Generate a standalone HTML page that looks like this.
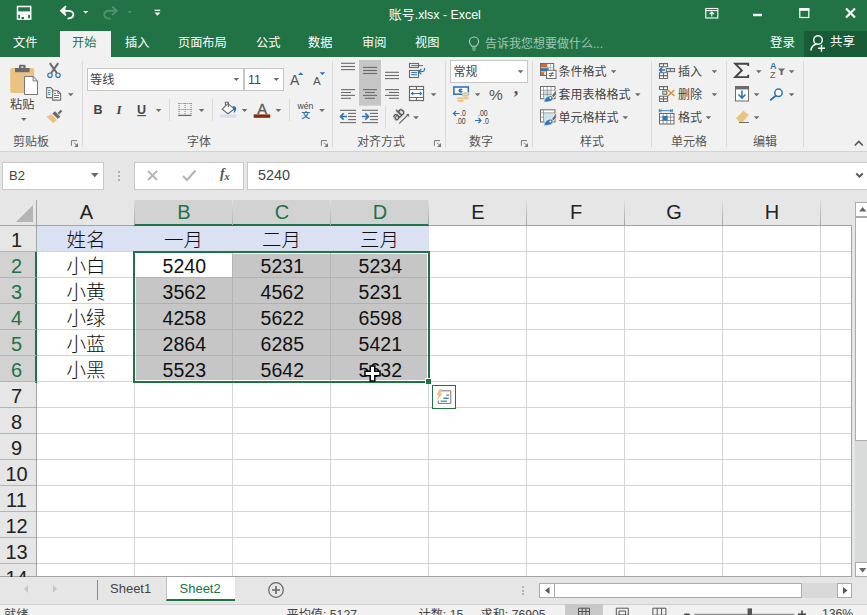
<!DOCTYPE html><html><head><meta charset="utf-8"><title>账号.xlsx - Excel</title><style>
*{box-sizing:border-box;margin:0;padding:0}
html,body{width:867px;height:615px;overflow:hidden;background:#fff}
body{position:relative;font-family:"Liberation Sans","Noto Sans CJK SC",sans-serif;font-size:12px;color:#444}
.a{position:absolute}
.t{position:absolute;white-space:nowrap;line-height:1}
.ui{font-family:"Liberation Sans","Noto Sans CJK SC",sans-serif;font-size:12.5px;color:#444}
.w{color:#fff}
.sep{position:absolute;width:1px;background:#dadada}
.cell{position:absolute;text-align:center;font-size:19.5px;line-height:26px;color:#111;font-weight:300;white-space:nowrap;font-family:"Liberation Sans","Noto Sans CJK SC",sans-serif}
.hd{position:absolute;text-align:center;font-size:20px;line-height:25px;color:#000;white-space:nowrap}
.rh{position:absolute;text-align:center;font-size:20px;line-height:26px;color:#000;white-space:nowrap;left:0;width:36px}
.gl{position:absolute;background:#d4d4d4}
.arr{position:absolute;width:0;height:0;border-left:3px solid transparent;border-right:3px solid transparent;border-top:3px solid #666}
</style></head><body>
<div class="a" style="left:0;top:0;width:867px;height:57px;background:#217346"></div>
<div class="t w" style="left:388.700px;top:8px;font-size:13px">账号<span style="font-size:12.400px">.xlsx - Excel</span></div>
<div class="a" style="left:60px;top:31px;width:51px;height:27px;background:#f1f1f1"></div>
<div class="t" style="left:13px;top:37.400px;font-size:12.200px;color:#fff">文件</div>
<div class="t" style="left:72px;top:37.400px;font-size:12.200px;color:#217346">开始</div>
<div class="t" style="left:125px;top:37.400px;font-size:12.200px;color:#fff">插入</div>
<div class="t" style="left:178px;top:37.400px;font-size:12.200px;color:#fff">页面布局</div>
<div class="t" style="left:256px;top:37.400px;font-size:12.200px;color:#fff">公式</div>
<div class="t" style="left:308px;top:37.400px;font-size:12.200px;color:#fff">数据</div>
<div class="t" style="left:362px;top:37.400px;font-size:12.200px;color:#fff">审阅</div>
<div class="t" style="left:415px;top:37.400px;font-size:12.200px;color:#fff">视图</div>
<div class="t" style="left:485px;top:37.500px;font-size:12px;color:#a2c5b1">告诉我您想要做什么...</div>
<div class="t w" style="left:770px;top:37px;font-size:12.5px">登录</div>
<div class="a" style="left:804px;top:31px;width:63px;height:26px;background:#185c37"></div>
<div class="t w" style="left:830px;top:36px;font-size:12.5px">共享</div>
<svg class="a" style="left:0;top:0" width="867" height="57" viewBox="0 0 867 57" fill="none">
<rect x="17.500" y="6.500" width="13.200" height="12.600" stroke="#fff" stroke-width="1.500"/><rect x="17.500" y="11.400" width="13.200" height="3.400" fill="#fff"/><path d="M20 14.500h8.200v5h-8.200z" fill="#fff"/><rect x="21.500" y="17" width="2.500" height="2.200" fill="#217346"/>
<path d="M62 10.800h6c7 0 7.500 7.500-.5 7.800" stroke="#fff" stroke-width="1.800"/><path d="M66 6.200l-5 4.600 5 4.600" stroke="#fff" stroke-width="1.800"/><path d="M65.500 7.500l-4 3.300 4 3.300z" fill="#fff"/>
<path d="M83.200 11h5l-2.500 2.700z" fill="#fff"/>
<path d="M116.500 10.800h-7.200c-7 0-7 8 1.200 8" stroke="#4f9170" stroke-width="1.900"/><path d="M112.200 6.500l4.600 4.300-4.600 4.300" stroke="#4f9170" stroke-width="1.900"/>
<path d="M127.500 11h4.600l-2.300 2.600z" fill="#4f9170"/>
<path d="M154.600 10.300h5.600" stroke="#fff" stroke-width="1.200"/><path d="M154.400 12.500h6l-3 3.200z" fill="#fff"/>
<rect x="705.800" y="8.500" width="12" height="9.500" stroke="#fff" stroke-width="1.100"/><path d="M705.800 10.600h12" stroke="#fff" stroke-width="1.100"/><path d="M711.800 16.500v-4M709.600 14.200l2.200-2.200 2.200 2.200" stroke="#fff" stroke-width="1.100"/>
<rect x="753" y="13.800" width="9" height="2.400" fill="#fff"/>
<rect x="799.800" y="9" width="9" height="8.500" stroke="#fff" stroke-width="1.200"/><rect x="799.200" y="8" width="10.200" height="2.800" fill="#fff"/>
<path d="M846 8.500l9 9M855 8.500l-9 9" stroke="#fff" stroke-width="2.200"/>
<path d="M471.800 46.200c-1.600-1.600-2.400-2.800-2.400-4.600a4.600 4.600 0 0 1 9.200 0c0 1.800-.8 3-2.400 4.600z" stroke="#b5d1c0" stroke-width="1.100"/><path d="M472 48h4M472.500 50h3" stroke="#b5d1c0" stroke-width="1.100"/>
<circle cx="818" cy="40" r="4.300" stroke="#fff" stroke-width="1.400"/><path d="M810.800 50.500c.8-4 3.200-6 5.800-6.500" stroke="#fff" stroke-width="1.400"/><path d="M818 48.200h7M821.500 44.700v7" stroke="#fff" stroke-width="1.400"/>
</svg>
<div class="a" style="left:0;top:57px;width:867px;height:95px;background:#f1f1f1"></div>
<div class="a" style="left:0;top:151px;width:867px;height:1px;background:#d2d2d2"></div>
<div class="a" style="left:0;top:152px;width:867px;height:48px;background:#e6e6e6"></div>
<div class="sep" style="left:82px;top:61px;height:86px"></div>
<div class="sep" style="left:332px;top:61px;height:86px"></div>
<div class="sep" style="left:445px;top:61px;height:86px"></div>
<div class="sep" style="left:532px;top:61px;height:86px"></div>
<div class="sep" style="left:651px;top:61px;height:86px"></div>
<div class="sep" style="left:726px;top:61px;height:86px"></div>
<div class="sep" style="left:803px;top:61px;height:86px"></div>
<div class="sep" style="left:169px;top:99px;height:22px"></div>
<div class="sep" style="left:212px;top:99px;height:22px"></div>
<div class="sep" style="left:289px;top:99px;height:22px"></div>
<div class="sep" style="left:385px;top:106px;height:22px"></div>
<div class="t ui" style="left:13px;top:135.500px;font-size:12px;color:#555">剪贴板</div>
<div class="t ui" style="left:187px;top:135.500px;font-size:12px;color:#555">字体</div>
<div class="t ui" style="left:357px;top:135.500px;font-size:12px;color:#555">对齐方式</div>
<div class="t ui" style="left:469px;top:135.500px;font-size:12px;color:#555">数字</div>
<div class="t ui" style="left:580px;top:135.500px;font-size:12px;color:#555">样式</div>
<div class="t ui" style="left:671px;top:135.500px;font-size:12px;color:#555">单元格</div>
<div class="t ui" style="left:753px;top:135.500px;font-size:12px;color:#555">编辑</div>
<svg class="a" style="left:0;top:57px" width="867" height="94" viewBox="0 57 867 94" fill="none">
<rect x="10.2" y="68" width="24" height="25" rx="2" fill="#eac282"/>
<rect x="15" y="68" width="14.6" height="4.2" fill="#6b6b6b"/><rect x="19" y="64.8" width="6.6" height="5" rx="1.2" fill="#6b6b6b"/><rect x="21.3" y="66.3" width="2" height="1.7" fill="#ddd"/>
<path d="M24.5 76.5h8.6l4.4 4.4v13.6h-13z" fill="#fff" stroke="#777" stroke-width="1"/><path d="M33.1 76.5v4.4h4.4" stroke="#777" stroke-width="1"/>
<path d="M21 118h5.6l-2.8 3z" fill="#6b6b6b"/>
<path d="M49.800 63.200l7 9.800M58.200 63.200l-7 9.800" stroke="#6b6b6b" stroke-width="2.100"/>
<circle cx="50" cy="75.2" r="2.2" stroke="#2e75b6" stroke-width="1.2"/><circle cx="58" cy="75.2" r="2.2" stroke="#2e75b6" stroke-width="1.2"/>
<path d="M46.700 87.600h4l2 2v8h-6z" fill="#fff" stroke="#6b6b6b" stroke-width="1.100"/>
<path d="M52.700 90.700h5l2.900 2.900v6.500h-7.900z" fill="#fff" stroke="#6b6b6b" stroke-width="1.100"/><path d="M57.700 90.700v2.900h2.900" stroke="#6b6b6b" stroke-width=".8"/>
<path d="M48 90.400h2.500M48 92.500h2.500M48 94.400h2.500M54 93.400h2M54 95.500h5M54 97.500h5" stroke="#2e75b6" stroke-width=".9"/>
<path d="M68 93.2h5.6l-2.8 3z" fill="#6b6b6b"/>
<path d="M46.600 116.600l4.800-2.300 5.600 5.700-4 3.200z" fill="#eac282"/>
<path d="M52.300 113.600l2.700-2.300 5.300 5.500-2.600 2z" fill="#6b6b6b"/><path d="M57.600 113l3.200-3.200 1.500 1.500-3.100 3.200z" fill="#6b6b6b"/>
<rect x="87.5" y="68.5" width="156" height="22" fill="#fff" stroke="#c6c6c6"/>
<rect x="244.5" y="68.5" width="39" height="22" fill="#fff" stroke="#c6c6c6"/>
<path d="M233.6 78h5.6l-2.8 3z" fill="#6b6b6b"/>
<path d="M273.6 78h5.6l-2.8 3z" fill="#6b6b6b"/>
<path d="M298 75l2.7-2.8 2.7 2.8z" fill="#2e75b6"/><path d="M319.6 72.2h5.6l-2.8 2.8z" fill="#2e75b6"/>
<path d="M137.2 115.6H146" stroke="#555" stroke-width="1.2"/>
<path d="M155.8 109h5.6l-2.8 3z" fill="#6b6b6b"/>
<rect x="178.6" y="103" width="1" height="1" fill="#7d7d7d"/>
<rect x="178.6" y="109" width="1" height="1" fill="#7d7d7d"/>
<rect x="180.6" y="103" width="1" height="1" fill="#7d7d7d"/>
<rect x="180.6" y="109" width="1" height="1" fill="#7d7d7d"/>
<rect x="182.6" y="103" width="1" height="1" fill="#7d7d7d"/>
<rect x="182.6" y="109" width="1" height="1" fill="#7d7d7d"/>
<rect x="184.6" y="103" width="1" height="1" fill="#7d7d7d"/>
<rect x="184.6" y="109" width="1" height="1" fill="#7d7d7d"/>
<rect x="186.6" y="103" width="1" height="1" fill="#7d7d7d"/>
<rect x="186.6" y="109" width="1" height="1" fill="#7d7d7d"/>
<rect x="188.6" y="103" width="1" height="1" fill="#7d7d7d"/>
<rect x="188.6" y="109" width="1" height="1" fill="#7d7d7d"/>
<rect x="190.6" y="103" width="1" height="1" fill="#7d7d7d"/>
<rect x="190.6" y="109" width="1" height="1" fill="#7d7d7d"/>
<rect x="178.6" y="103" width="1" height="1" fill="#7d7d7d"/>
<rect x="184.6" y="103" width="1" height="1" fill="#7d7d7d"/>
<rect x="190.6" y="103" width="1" height="1" fill="#7d7d7d"/>
<rect x="178.6" y="105" width="1" height="1" fill="#7d7d7d"/>
<rect x="184.6" y="105" width="1" height="1" fill="#7d7d7d"/>
<rect x="190.6" y="105" width="1" height="1" fill="#7d7d7d"/>
<rect x="178.6" y="107" width="1" height="1" fill="#7d7d7d"/>
<rect x="184.6" y="107" width="1" height="1" fill="#7d7d7d"/>
<rect x="190.6" y="107" width="1" height="1" fill="#7d7d7d"/>
<rect x="178.6" y="109" width="1" height="1" fill="#7d7d7d"/>
<rect x="184.6" y="109" width="1" height="1" fill="#7d7d7d"/>
<rect x="190.6" y="109" width="1" height="1" fill="#7d7d7d"/>
<rect x="178.6" y="111" width="1" height="1" fill="#7d7d7d"/>
<rect x="184.6" y="111" width="1" height="1" fill="#7d7d7d"/>
<rect x="190.6" y="111" width="1" height="1" fill="#7d7d7d"/>
<rect x="178.6" y="113" width="1" height="1" fill="#7d7d7d"/>
<rect x="184.6" y="113" width="1" height="1" fill="#7d7d7d"/>
<rect x="190.6" y="113" width="1" height="1" fill="#7d7d7d"/>
<path d="M178.2 115.4H191.6" stroke="#6b6b6b" stroke-width="1.3"/>
<path d="M198.8 109h5.6l-2.8 3z" fill="#6b6b6b"/>
<path d="M222.200 109.200l5.800-5.500 6.200 5.200-6.200 4.800z" fill="#fff" stroke="#6b6b6b" stroke-width="1.100"/><path d="M225.400 105.600v-3.300h3v5" stroke="#6b6b6b" stroke-width="1.100"/>
<path d="M232.800 106c2.600.2 3.800 1.400 3.400 3.200-.3 1.400-1.200 2.600-2.400 4 .3-2.200.2-3.800-1-5z" fill="#2e75b6"/>
<rect x="220" y="114.400" width="16.200" height="3.400" fill="#d5dff0"/>
<path d="M241.8 109h5.6l-2.8 3z" fill="#6b6b6b"/>
<rect x="253.700" y="114.400" width="16.500" height="3.400" fill="#8e2a0b"/>
<path d="M275.6 109h5.6l-2.8 3z" fill="#6b6b6b"/>
<path d="M319.2 109h5.6l-2.8 3z" fill="#6b6b6b"/>
<rect x="359" y="60" width="22" height="45.700" fill="#c6c6c6"/>
<path d="M341 63.3H355" stroke="#6b6b6b" stroke-width="1.1"/>
<path d="M341 66.5H355" stroke="#6b6b6b" stroke-width="1.1"/>
<path d="M341 69.6H355" stroke="#6b6b6b" stroke-width="1.1"/>
<path d="M363 67.4H377" stroke="#6b6b6b" stroke-width="1.1"/>
<path d="M363 70.5H377" stroke="#6b6b6b" stroke-width="1.1"/>
<path d="M363 73.5H377" stroke="#6b6b6b" stroke-width="1.1"/>
<path d="M385 72.3H399" stroke="#6b6b6b" stroke-width="1.1"/>
<path d="M385 75.5H399" stroke="#6b6b6b" stroke-width="1.1"/>
<path d="M385 78.6H399" stroke="#6b6b6b" stroke-width="1.1"/>
<path d="M341 89.6H355" stroke="#6b6b6b" stroke-width="1.1"/>
<path d="M363 89.6H377" stroke="#6b6b6b" stroke-width="1.1"/>
<path d="M385 89.6H399" stroke="#6b6b6b" stroke-width="1.1"/>
<path d="M341 92.5H351" stroke="#6b6b6b" stroke-width="1.1"/>
<path d="M365 92.5H375" stroke="#6b6b6b" stroke-width="1.1"/>
<path d="M389 92.5H399" stroke="#6b6b6b" stroke-width="1.1"/>
<path d="M341 95.4H355" stroke="#6b6b6b" stroke-width="1.1"/>
<path d="M363 95.4H377" stroke="#6b6b6b" stroke-width="1.1"/>
<path d="M385 95.4H399" stroke="#6b6b6b" stroke-width="1.1"/>
<path d="M341 98.3H351" stroke="#6b6b6b" stroke-width="1.1"/>
<path d="M365 98.3H375" stroke="#6b6b6b" stroke-width="1.1"/>
<path d="M389 98.3H399" stroke="#6b6b6b" stroke-width="1.1"/>
<rect x="409.500" y="63.500" width="9" height="4" stroke="#6b6b6b" stroke-width="1.100" fill="#f1f1f1"/><rect x="409.500" y="70.500" width="9" height="7" stroke="#6b6b6b" stroke-width="1.100" fill="#f1f1f1"/>
<path d="M411.200 65.600H423M411.200 72.600h6M411.200 74.700h6" stroke="#2e75b6" stroke-width="1"/><path d="M424.600 68c.2 2.500-1 3.700-3 3.700h-2.500M421.400 69l-2.800 2.700 2.800 2.700" stroke="#2e75b6" stroke-width="1.200"/>
<rect x="409.500" y="86.500" width="14" height="14" stroke="#6b6b6b" stroke-width="1.200" fill="#fff"/><path d="M409.500 89.500h14M409.500 97.500h14M416.500 86.500v3M416.500 97.500v3" stroke="#6b6b6b" stroke-width="1.100"/>
<path d="M411.500 93.500h10M413.200 91.800l-1.700 1.700 1.700 1.700M419.800 91.800l1.700 1.700-1.700 1.700" stroke="#2e75b6" stroke-width="1.100"/>
<path d="M430.8 93.3h5.6l-2.8 3z" fill="#6b6b6b"/>
<path d="M340 110.3H356" stroke="#6b6b6b" stroke-width="1.1"/>
<path d="M340 122.6H356" stroke="#6b6b6b" stroke-width="1.1"/>
<path d="M348 113.4H356" stroke="#6b6b6b" stroke-width="1.1"/>
<path d="M348 116.5H356" stroke="#6b6b6b" stroke-width="1.1"/>
<path d="M348 119.6H356" stroke="#6b6b6b" stroke-width="1.1"/>
<path d="M362 110.3H378" stroke="#6b6b6b" stroke-width="1.1"/>
<path d="M362 122.6H378" stroke="#6b6b6b" stroke-width="1.1"/>
<path d="M370 113.4H378" stroke="#6b6b6b" stroke-width="1.1"/>
<path d="M370 116.5H378" stroke="#6b6b6b" stroke-width="1.1"/>
<path d="M370 119.6H378" stroke="#6b6b6b" stroke-width="1.1"/>
<path d="M340.500 116.500h6.500M343.700 113.300l-3.200 3.200 3.200 3.200" stroke="#2e75b6" stroke-width="1.700"/>
<path d="M362 116.500h6.500M365.300 113.300l3.200 3.200-3.200 3.200" stroke="#2e75b6" stroke-width="1.700"/>
<path d="M399.200 123.600l8.600-8.600" stroke="#6b6b6b" stroke-width="1.200"/><path d="M406 114h3.100v3.100z" fill="#6b6b6b"/>
<path d="M413.2 116.3h5.6l-2.8 3z" fill="#6b6b6b"/>
<rect x="450.500" y="60.500" width="77" height="22" fill="#fff" stroke="#c6c6c6"/>
<path d="M517.7 70.2h5.6l-2.8 3z" fill="#6b6b6b"/>
<rect x="453.900" y="87" width="14.400" height="7.200" fill="#fff" stroke="#2e75b6" stroke-width="1.600"/><circle cx="460.800" cy="90.600" r="2.200" fill="#2e75b6"/><path d="M460.800 90.600l2.600-1.600v2.600z" fill="#fff"/>
<ellipse cx="465.400" cy="93.4" rx="3.700" ry="1.400" fill="#eac282" stroke="#f1f1f1" stroke-width=".5"/>
<ellipse cx="465.400" cy="95.8" rx="3.700" ry="1.400" fill="#eac282" stroke="#f1f1f1" stroke-width=".5"/>
<ellipse cx="465.400" cy="98.2" rx="3.700" ry="1.400" fill="#eac282" stroke="#f1f1f1" stroke-width=".5"/>
<ellipse cx="460.400" cy="98.3" rx="3.700" ry="1.400" fill="#eac282" stroke="#f1f1f1" stroke-width=".5"/>
<ellipse cx="460.400" cy="100.8" rx="3.700" ry="1.400" fill="#eac282" stroke="#f1f1f1" stroke-width=".5"/>
<path d="M474.8 93.3h5.6l-2.8 3z" fill="#6b6b6b"/>
<path d="M453.500 113.500h6M456 111l-2.500 2.500 2.500 2.500" stroke="#2e75b6" stroke-width="1.200"/>
<path d="M475 120.500h6M478.500 118l2.500 2.500-2.500 2.500" stroke="#2e75b6" stroke-width="1.200"/>
<rect x="540.500" y="63.500" width="13.200" height="12" fill="#fff" stroke="#6b6b6b"/><path d="M547.200 63.500v12M550.500 63.500v6M540.500 67.600h13M540.500 71.600h7" stroke="#9a9a9a" stroke-width=".6"/><rect x="541" y="64" width="6" height="3.300" fill="#d06f2c"/><rect x="541" y="68.200" width="7.700" height="3" fill="#2e75b6"/><rect x="541" y="72.100" width="3.300" height="3" fill="#d06f2c"/>
<rect x="546.500" y="70.300" width="9.500" height="8.200" fill="#fff" stroke="#6b6b6b"/><path d="M548.800 73.400h5M548.800 75.600h5M552.600 72l-2.600 5" stroke="#444" stroke-width=".8"/>
<rect x="540.500" y="86.5" width="14.500" height="12.200" fill="#fff" stroke="#6b6b6b"/>
<rect x="543.500" y="90.2" width="7.500" height="8.200" fill="#cfe3ea"/>
<path d="M540.500 90.2h14.500M540.500 94.4h14.500M543.500 86.5v12.200M547.300 86.5v12.200M551 86.5v12.200" stroke="#8a8a8a" stroke-width=".7"/>
<path d="M551.600 95.8l4.700-6.800v5.600l-2.900 3z" fill="#6b6b6b" stroke="#f1f1f1" stroke-width=".8"/>
<path d="M543.800 102.1c1-3.800 3.800-6.200 6.700-6.200 2.400 0 3.200 2.400 1.700 4.200-1.300 1.600-4.200 2-8.400 2z" fill="#2e75b6" stroke="#f1f1f1" stroke-width=".6"/><circle cx="550.400" cy="98.1" r="1" fill="#fff"/>
<rect x="540.500" y="109.8" width="14.500" height="12.200" fill="#fff" stroke="#6b6b6b"/>
<rect x="543.500" y="112.8" width="10" height="8.700" fill="#cfe3ea"/>
<path d="M540.500 112.8h14.500M543.500 109.8v12.200M540.500 117.2h3" stroke="#8a8a8a" stroke-width=".7"/>
<path d="M551.600 119.1l4.700-6.800v5.600l-2.900 3z" fill="#6b6b6b" stroke="#f1f1f1" stroke-width=".8"/>
<path d="M543.800 125.39999999999999c1-3.800 3.800-6.200 6.700-6.200 2.400 0 3.200 2.400 1.700 4.200-1.300 1.600-4.200 2-8.400 2z" fill="#2e75b6" stroke="#f1f1f1" stroke-width=".6"/><circle cx="550.400" cy="121.39999999999999" r="1" fill="#fff"/>
<path d="M610.8 70.2h5.6l-2.8 3z" fill="#6b6b6b"/>
<path d="M635 93.3h5.6l-2.8 3z" fill="#6b6b6b"/>
<path d="M622.5 116.3h5.6l-2.8 3z" fill="#6b6b6b"/>
<path d="M659.500 63.600h8v3.100h-8zM663.500 63.600v3.100M659.500 72.800h8v5.700h-8zM659.500 75.600h8M663.500 72.800v5.700" stroke="#6b6b6b" stroke-width="1.100" fill="#fff"/>
<rect x="666.300" y="68.500" width="8.300" height="3.100" fill="#cfe3ea" stroke="#6b6b6b"/><path d="M670.400 68.500v3.100" stroke="#6b6b6b"/>
<path d="M659.600 70h5.400M662.400 67.300l-2.800 2.700 2.800 2.700" stroke="#2e75b6" stroke-width="1.500"/>
<path d="M711.6 70.2h5.6l-2.8 3z" fill="#6b6b6b"/>
<path d="M659.500 86.600h8v2.900h-8zM663.500 86.600v2.900M659.500 96.300h8v5.200h-8zM659.500 98.900h8M663.500 96.300v5.200" stroke="#6b6b6b" stroke-width="1.100" fill="#fff"/>
<rect x="662.800" y="91.100" width="4" height="3.200" fill="#cfe3ea" stroke="#6b6b6b"/>
<path d="M667.800 90l6.600 6M674.400 90l-6.600 6" stroke="#e08a2e" stroke-width="1.400"/>
<path d="M711.6 93.3h5.6l-2.8 3z" fill="#6b6b6b"/>
<rect x="659.500" y="113.500" width="14.500" height="10.500" fill="#fff" stroke="#6b6b6b"/><path d="M659.500 117h14.500M659.500 120.500h14.500M663.200 113.500v10.500M666.900 113.500v10.500M670.600 113.500v10.500" stroke="#6b6b6b" stroke-width=".7"/>
<rect x="662.500" y="116" width="5" height="4.500" fill="#2e75b6"/>
<path d="M659.500 110.700h12.500M659.300 109v3.400M672.300 109v3.400M661.500 109.300l-1.500 1.400 1.500 1.400M670 109.300l1.500 1.400-1.500 1.400" stroke="#2e75b6" stroke-width=".9"/>
<path d="M705.6 116.3h5.6l-2.8 3z" fill="#6b6b6b"/>
<path d="M748.200 66v-2.300h-13l6.600 6.700-6.600 6.700h13v-2.300" stroke="#444" stroke-width="1.900" stroke-linejoin="miter"/>
<path d="M756 70.2h5.6l-2.8 3z" fill="#6b6b6b"/>
<rect x="735.500" y="86.500" width="13" height="14.500" fill="#fff" stroke="#6b6b6b"/><rect x="735" y="86.200" width="14" height="3.200" fill="#6b6b6b"/>
<path d="M742 90.500v7.500M738.500 94.500l3.500 3.500 3.500-3.500" stroke="#2e75b6" stroke-width="1.600"/>
<path d="M753.8 93.3h5.6l-2.8 3z" fill="#6b6b6b"/>
<path d="M735.800 118.500l7.700-7.700 5.300 4.200-6.300 7.300h-3z" fill="#eac282"/><path d="M735.800 118.500l3.700 3.800" stroke="#f1f1f1" stroke-width=".8"/><path d="M739 122.500h10" stroke="#6b6b6b" stroke-width="1"/>
<path d="M753.8 116.3h5.6l-2.8 3z" fill="#6b6b6b"/>
<path d="M778 68.500h7.200l-2.600 2.800v3.700h-2v-3.700z" fill="#6b6b6b"/>
<path d="M788.8 70.2h5.6l-2.8 3z" fill="#6b6b6b"/>
<circle cx="778.500" cy="92.800" r="3.700" stroke="#2e75b6" stroke-width="1.500" fill="#fff"/><path d="M775.800 95.800l-5 4" stroke="#2e75b6" stroke-width="2" stroke-linecap="round"/>
<path d="M788.8 93.3h5.6l-2.8 3z" fill="#6b6b6b"/>
<path d="M71.4 145.800v-5.200h5.600" stroke="#777" stroke-width="1"/><path d="M78 143v3.900h-3.900z" fill="#777"/><path d="M74.2 142.800l3 3" stroke="#777" stroke-width="1"/>
<path d="M321.4 145.800v-5.200h5.600" stroke="#777" stroke-width="1"/><path d="M328 143v3.900h-3.900z" fill="#777"/><path d="M324.2 142.800l3 3" stroke="#777" stroke-width="1"/>
<path d="M434.4 145.800v-5.200h5.600" stroke="#777" stroke-width="1"/><path d="M441 143v3.900h-3.900z" fill="#777"/><path d="M437.2 142.800l3 3" stroke="#777" stroke-width="1"/>
<path d="M521.4 145.800v-5.200h5.600" stroke="#777" stroke-width="1"/><path d="M528 143v3.900h-3.900z" fill="#777"/><path d="M524.2 142.800l3 3" stroke="#777" stroke-width="1"/>
<path d="M854.800 145.500l4-4 4 4" stroke="#555" stroke-width="1.600"/>
</svg>
<div class="t" style="left:10px;top:98.5px;font-size:12.2px;color:#444;">粘贴</div>
<div class="t" style="left:90px;top:74px;font-size:12.2px;color:#444;">等线</div>
<div class="t" style="left:248px;top:74px;font-size:12.5px;color:#444;">11</div>
<div class="t" style="left:93.5px;top:104.3px;font-size:12.5px;color:#444;font-weight:bold">B</div>
<div class="t" style="left:116.5px;top:103px;font-size:12.5px;color:#444;font-style:italic;font-weight:bold;font-family:'Liberation Serif',serif;font-size:13px">I</div>
<div class="t" style="left:137px;top:104.3px;font-size:12.5px;color:#444;font-weight:bold">U</div>
<div class="t" style="left:290px;top:72.6px;font-size:14px;color:#555;">A</div>
<div class="t" style="left:313px;top:75.5px;font-size:11.5px;color:#555;">A</div>
<div class="t" style="left:257.2px;top:101.6px;font-size:14.8px;color:#5a5a5a;-webkit-text-stroke:.35px #5a5a5a">A</div>
<div class="t" style="left:297.5px;top:101.5px;font-size:8.6px;color:#444;">wén</div>
<div class="t" style="left:301.5px;top:110.5px;font-size:8.5px;color:#2e75b6;font-weight:bold">文</div>
<div class="t" style="left:0px;top:0px;font-size:11.8px;color:#333;-webkit-text-stroke:.3px #333;transform:rotate(-45deg);transform-origin:left top;left:390px;top:114.600px;will-change:transform">ab</div>
<div class="t" style="left:453.5px;top:65.5px;font-size:12px;color:#444;">常规</div>
<div class="t" style="left:489px;top:87px;font-size:15.5px;color:#555;">%</div>
<div class="t" style="left:513.8px;top:79px;font-size:18px;color:#555;font-weight:bold;font-family:'Liberation Serif',serif">,</div>
<div class="t" style="left:460.3px;top:109.2px;font-size:8.6px;color:#3a3a3a;transform:scaleX(.8);transform-origin:left top">.0</div>
<div class="t" style="left:455.8px;top:116.9px;font-size:8.6px;color:#3a3a3a;transform:scaleX(.8);transform-origin:left top">.00</div>
<div class="t" style="left:477.5px;top:109.2px;font-size:8.6px;color:#3a3a3a;transform:scaleX(.8);transform-origin:left top">.00</div>
<div class="t" style="left:482.5px;top:116.9px;font-size:8.6px;color:#3a3a3a;transform:scaleX(.8);transform-origin:left top">.0</div>
<div class="t" style="left:558.4px;top:66px;font-size:12px;color:#444;">条件格式</div>
<div class="t" style="left:558.4px;top:89px;font-size:12px;color:#444;">套用表格格式</div>
<div class="t" style="left:558.4px;top:112px;font-size:12px;color:#444;">单元格样式</div>
<div class="t" style="left:678px;top:66px;font-size:12px;color:#444;">插入</div>
<div class="t" style="left:678px;top:89px;font-size:12px;color:#444;">删除</div>
<div class="t" style="left:678px;top:112px;font-size:12px;color:#444;">格式</div>
<div class="t" style="left:770px;top:62px;font-size:9px;color:#2e75b6;font-weight:bold">A</div>
<div class="t" style="left:770px;top:71px;font-size:9px;color:#6b5560;">Z</div>
<div class="a" style="left:2px;top:162px;width:102px;height:28px;background:#fff;border:1px solid #c8c8c8"></div>
<div class="t" style="left:9px;top:169px;font-size:13px;color:#444">B2</div>
<svg class="a" style="left:90.800px;top:173.300px" width="8" height="5" viewBox="0 0 8 5"><path d="M0 0h7.600l-3.800 4.200z" fill="#666"/></svg>
<div class="a" style="left:118px;top:171px;width:2px;height:2px;background:#b0b0b0"></div>
<div class="a" style="left:118px;top:175px;width:2px;height:2px;background:#b0b0b0"></div>
<div class="a" style="left:118px;top:179px;width:2px;height:2px;background:#b0b0b0"></div>
<div class="a" style="left:134px;top:162px;width:110px;height:28px;background:#fff;border:1px solid #c8c8c8"></div>
<div class="a" style="left:247px;top:162px;width:620px;height:28px;background:#fff;border:1px solid #c8c8c8;border-right:none"></div>
<div class="t" style="left:258px;top:167.500px;font-size:14.400px;color:#444">5240</div>
<svg class="a" style="left:144px;top:168px" width="100" height="16" viewBox="0 0 100 16"><path d="M4 3l9 9M13 3l-9 9" stroke="#b4b4b4" stroke-width="1.800" fill="none"/><path d="M39 8l4 4 8.500-9.500" stroke="#b4b4b4" stroke-width="2" fill="none"/></svg>
<div class="t" style="left:220px;top:167px;font-size:14px;color:#555;font-family:'Liberation Serif',serif;font-style:italic;font-weight:bold">f<span style="font-size:11px;position:relative;top:2px;left:-.5px">x</span></div>
<svg class="a" style="left:855px;top:172px" width="10" height="8" viewBox="0 0 10 8"><path d="M1.300 1.500l3.200 3.200 3.200-3.200" stroke="#555" stroke-width="1.800" fill="none"/></svg>
<div class="a" style="left:0;top:200px;width:867px;height:404px;background:#e6e6e6"></div>
<div class="a" style="left:37px;top:226px;width:814px;height:350px;background:#fff"></div>
<div class="a" style="left:135px;top:200px;width:293px;height:24px;background:#d2d2d2"></div>
<div class="a" style="left:134px;top:224px;width:295px;height:2px;background:#217346"></div>
<div class="a" style="left:0;top:252px;width:35px;height:130px;background:#d2d2d2"></div>
<div class="a" style="left:35px;top:252px;width:2px;height:131px;background:#217346"></div>
<div class="a" style="left:0;top:225px;width:134px;height:1px;background:#a3a3a3"></div>
<div class="a" style="left:429px;top:225px;width:423px;height:1px;background:#a3a3a3"></div>
<div class="a" style="left:36px;top:200px;width:1px;height:52px;background:#a3a3a3"></div>
<div class="a" style="left:36px;top:383px;width:1px;height:194px;background:#a3a3a3"></div>
<div class="a" style="left:851px;top:225px;width:1px;height:352px;background:#a3a3a3"></div>
<div class="a" style="left:0;top:576px;width:852px;height:1px;background:#a3a3a3"></div>
<div class="a" style="left:134px;top:200px;width:1px;height:25px;background:linear-gradient(#e0e0e0,#a3a3a3)"></div>
<div class="a" style="left:232px;top:200px;width:1px;height:25px;background:linear-gradient(#e0e0e0,#b0b0b0)"></div>
<div class="a" style="left:330px;top:200px;width:1px;height:25px;background:linear-gradient(#e0e0e0,#b0b0b0)"></div>
<div class="a" style="left:428px;top:200px;width:1px;height:25px;background:linear-gradient(#e0e0e0,#a3a3a3)"></div>
<div class="a" style="left:526px;top:200px;width:1px;height:25px;background:linear-gradient(#e0e0e0,#a3a3a3)"></div>
<div class="a" style="left:624px;top:200px;width:1px;height:25px;background:linear-gradient(#e0e0e0,#a3a3a3)"></div>
<div class="a" style="left:722px;top:200px;width:1px;height:25px;background:linear-gradient(#e0e0e0,#a3a3a3)"></div>
<div class="a" style="left:820px;top:200px;width:1px;height:25px;background:linear-gradient(#e0e0e0,#a3a3a3)"></div>
<div class="a" style="left:0;top:251px;width:36px;height:1px;background:#b4b4b4"></div>
<div class="a" style="left:0;top:277px;width:36px;height:1px;background:#b4b4b4"></div>
<div class="a" style="left:0;top:303px;width:36px;height:1px;background:#b4b4b4"></div>
<div class="a" style="left:0;top:329px;width:36px;height:1px;background:#b4b4b4"></div>
<div class="a" style="left:0;top:355px;width:36px;height:1px;background:#b4b4b4"></div>
<div class="a" style="left:0;top:381px;width:36px;height:1px;background:#b4b4b4"></div>
<div class="a" style="left:0;top:407px;width:36px;height:1px;background:#b4b4b4"></div>
<div class="a" style="left:0;top:433px;width:36px;height:1px;background:#b4b4b4"></div>
<div class="a" style="left:0;top:459px;width:36px;height:1px;background:#b4b4b4"></div>
<div class="a" style="left:0;top:485px;width:36px;height:1px;background:#b4b4b4"></div>
<div class="a" style="left:0;top:511px;width:36px;height:1px;background:#b4b4b4"></div>
<div class="a" style="left:0;top:537px;width:36px;height:1px;background:#b4b4b4"></div>
<div class="a" style="left:0;top:563px;width:36px;height:1px;background:#b4b4b4"></div>
<div class="a" style="left:0;top:589px;width:36px;height:1px;background:#b4b4b4"></div>
<svg class="a" style="left:15px;top:204px" width="19" height="19" viewBox="0 0 19 19"><path d="M18 1v17H1z" fill="#b5b5b5"/></svg>
<div class="gl" style="left:134px;top:226px;width:1px;height:350px"></div>
<div class="gl" style="left:232px;top:226px;width:1px;height:350px"></div>
<div class="gl" style="left:330px;top:226px;width:1px;height:350px"></div>
<div class="gl" style="left:428px;top:226px;width:1px;height:350px"></div>
<div class="gl" style="left:526px;top:226px;width:1px;height:350px"></div>
<div class="gl" style="left:624px;top:226px;width:1px;height:350px"></div>
<div class="gl" style="left:722px;top:226px;width:1px;height:350px"></div>
<div class="gl" style="left:820px;top:226px;width:1px;height:350px"></div>
<div class="gl" style="left:37px;top:251px;width:814px;height:1px"></div>
<div class="gl" style="left:37px;top:277px;width:814px;height:1px"></div>
<div class="gl" style="left:37px;top:303px;width:814px;height:1px"></div>
<div class="gl" style="left:37px;top:329px;width:814px;height:1px"></div>
<div class="gl" style="left:37px;top:355px;width:814px;height:1px"></div>
<div class="gl" style="left:37px;top:381px;width:814px;height:1px"></div>
<div class="gl" style="left:37px;top:407px;width:814px;height:1px"></div>
<div class="gl" style="left:37px;top:433px;width:814px;height:1px"></div>
<div class="gl" style="left:37px;top:459px;width:814px;height:1px"></div>
<div class="gl" style="left:37px;top:485px;width:814px;height:1px"></div>
<div class="gl" style="left:37px;top:511px;width:814px;height:1px"></div>
<div class="gl" style="left:37px;top:537px;width:814px;height:1px"></div>
<div class="gl" style="left:37px;top:563px;width:814px;height:1px"></div>
<div class="a" style="left:37px;top:226px;width:392px;height:25px;background:#d9e1f2"></div>
<div class="a" style="left:136px;top:254px;width:291px;height:126px;background:#c6c6c6"></div>
<div class="a" style="left:232px;top:254px;width:1px;height:126px;background:#b2b2b2"></div>
<div class="a" style="left:330px;top:254px;width:1px;height:126px;background:#b2b2b2"></div>
<div class="a" style="left:136px;top:277px;width:291px;height:1px;background:#b2b2b2"></div>
<div class="a" style="left:136px;top:303px;width:291px;height:1px;background:#b2b2b2"></div>
<div class="a" style="left:136px;top:329px;width:291px;height:1px;background:#b2b2b2"></div>
<div class="a" style="left:136px;top:355px;width:291px;height:1px;background:#b2b2b2"></div>
<div class="a" style="left:135px;top:253px;width:97px;height:24px;background:#fff"></div>
<div class="a" style="left:133px;top:251px;width:297px;height:132px;border:2px solid #217346"></div>
<div class="a" style="left:425px;top:378px;width:6px;height:6px;background:#217346;border:1px solid #fff;border-right:none;border-bottom:none"></div>
<div class="hd" style="left:38px;top:200px;width:97px;color:#222">A</div>
<div class="hd" style="left:135px;top:200px;width:98px;color:#217346">B</div>
<div class="hd" style="left:233px;top:200px;width:98px;color:#217346">C</div>
<div class="hd" style="left:331px;top:200px;width:98px;color:#217346">D</div>
<div class="hd" style="left:429px;top:200px;width:98px;color:#222">E</div>
<div class="hd" style="left:527px;top:200px;width:98px;color:#222">F</div>
<div class="hd" style="left:625px;top:200px;width:98px;color:#222">G</div>
<div class="hd" style="left:723px;top:200px;width:98px;color:#222">H</div>
<div class="rh" style="top:227px;color:#222;left:-1.500px">1</div>
<div class="rh" style="top:253px;color:#217346;left:-1.500px">2</div>
<div class="rh" style="top:279px;color:#217346;left:-1.500px">3</div>
<div class="rh" style="top:305px;color:#217346;left:-1.500px">4</div>
<div class="rh" style="top:331px;color:#217346;left:-1.500px">5</div>
<div class="rh" style="top:357px;color:#217346;left:-1.500px">6</div>
<div class="rh" style="top:383px;color:#222;left:-1.500px">7</div>
<div class="rh" style="top:409px;color:#222;left:-1.500px">8</div>
<div class="rh" style="top:435px;color:#222;left:-1.500px">9</div>
<div class="rh" style="top:461px;color:#222;left:-1.500px">10</div>
<div class="rh" style="top:487px;color:#222;left:-1.500px">11</div>
<div class="rh" style="top:513px;color:#222;left:-1.500px">12</div>
<div class="rh" style="top:539px;color:#222;left:-1.500px">13</div>
<div class="rh" style="top:565px;color:#222;left:-1.500px">14</div>
<div class="cell" style="left:37.4px;top:227px;width:97px">姓名</div>
<div class="cell" style="left:134.4px;top:227px;width:98px">一月</div>
<div class="cell" style="left:232.4px;top:227px;width:98px">二月</div>
<div class="cell" style="left:330.4px;top:227px;width:98px">三月</div>
<div class="cell" style="left:37.4px;top:253px;width:97px">小白</div>
<div class="cell" style="left:135.3px;top:253px;width:98px">5240</div>
<div class="cell" style="left:233.3px;top:253px;width:98px">5231</div>
<div class="cell" style="left:331.3px;top:253px;width:98px">5234</div>
<div class="cell" style="left:37.4px;top:279px;width:97px">小黄</div>
<div class="cell" style="left:135.3px;top:279px;width:98px">3562</div>
<div class="cell" style="left:233.3px;top:279px;width:98px">4562</div>
<div class="cell" style="left:331.3px;top:279px;width:98px">5231</div>
<div class="cell" style="left:37.4px;top:305px;width:97px">小绿</div>
<div class="cell" style="left:135.3px;top:305px;width:98px">4258</div>
<div class="cell" style="left:233.3px;top:305px;width:98px">5622</div>
<div class="cell" style="left:331.3px;top:305px;width:98px">6598</div>
<div class="cell" style="left:37.4px;top:331px;width:97px">小蓝</div>
<div class="cell" style="left:135.3px;top:331px;width:98px">2864</div>
<div class="cell" style="left:233.3px;top:331px;width:98px">6285</div>
<div class="cell" style="left:331.3px;top:331px;width:98px">5421</div>
<div class="cell" style="left:37.4px;top:357px;width:97px">小黑</div>
<div class="cell" style="left:135.3px;top:357px;width:98px">5523</div>
<div class="cell" style="left:233.3px;top:357px;width:98px">5642</div>
<div class="cell" style="left:331.3px;top:357px;width:98px">5632</div>
<div class="a" style="left:432px;top:385px;width:24px;height:24px;background:#fff;border:1px solid #217346"></div>
<svg class="a" style="left:432px;top:385px" width="24" height="24" viewBox="432 385 24 24" fill="none"><path d="M441 390.800h9.800v12.600h-12.500v-3" stroke="#777" stroke-width="1"/><path d="M446.200 395.200h3" stroke="#c8602a" stroke-width="1.200"/><path d="M443.400 398.200h5.400" stroke="#2e75b6" stroke-width="1.300"/><path d="M440.600 401.200h6.400" stroke="#3f9a8a" stroke-width="1.300"/><path d="M439.500 389l3 .2-2.200 4.300 2.200.3-5.600 6.600 1.600-5.200-2-.3z" fill="#eac282"/></svg>
<svg class="a" style="left:364px;top:364px" width="18" height="18" viewBox="364 364 18 18"><path d="M370.200 366h4.600v5.200h5.200v4.600h-5.200v5.200h-4.600v-5.200h-5.200v-4.600h5.200z" fill="#fff" stroke="#000" stroke-width="1.500"/></svg>
<div class="a" style="left:0;top:577px;width:867px;height:27px;background:#e6e6e6"></div>
<div class="a" style="left:855px;top:202px;width:14px;height:15px;background:#fff;border:1px solid #ababab"></div>
<div class="a" style="left:855px;top:217px;width:14px;height:224px;background:#fff;border:1px solid #ababab"></div>
<div class="a" style="left:855px;top:441px;width:13px;height:122px;background:#d9dada"></div>
<div class="a" style="left:855px;top:562px;width:14px;height:15px;background:#fff;border:1px solid #ababab"></div>
<svg class="a" style="left:859px;top:207px" width="8" height="5" viewBox="0 0 8 5"><path d="M0 4.500l3.700-4.500 3.700 4.500z" fill="#666"/></svg>
<svg class="a" style="left:859px;top:567.500px" width="8" height="5" viewBox="0 0 8 5"><path d="M0 0l3.700 4.500 3.700-4.500z" fill="#666"/></svg>
<div class="a" style="left:97px;top:580px;width:1px;height:20px;background:#8a8a8a"></div>
<div class="t" style="left:110px;top:582px;font-size:13px;color:#444">Sheet1</div>
<div class="a" style="left:166px;top:577px;width:69px;height:24px;background:#fff;border-bottom:2.500px solid #217346;border-left:1px solid #c0c0c0"></div>
<div class="t" style="left:179.500px;top:582px;font-size:13px;color:#217346">Sheet2</div>
<svg class="a" style="left:267px;top:581px" width="18" height="18" viewBox="0 0 18 18"><circle cx="9" cy="9" r="7.300" fill="none" stroke="#666" stroke-width="1.200"/><path d="M9 5v8M5 9h8" stroke="#666" stroke-width="1.600"/></svg>
<svg class="a" style="left:22px;top:585px" width="40" height="9" viewBox="0 0 40 9"><path d="M6 0v8L2 4z" fill="#c6c6c6"/><path d="M31 0v8l4-4z" fill="#c6c6c6"/></svg>
<div class="a" style="left:521.500px;top:586px;width:2px;height:2px;background:#b0b0b0"></div>
<div class="a" style="left:521.500px;top:589.5px;width:2px;height:2px;background:#b0b0b0"></div>
<div class="a" style="left:521.500px;top:593px;width:2px;height:2px;background:#b0b0b0"></div>
<div class="a" style="left:554px;top:583px;width:284px;height:15px;background:#d9d9d9"></div>
<div class="a" style="left:539px;top:583px;width:16px;height:15px;background:#fff;border:1px solid #ababab"></div>
<div class="a" style="left:837px;top:583px;width:15px;height:15px;background:#fff;border:1px solid #ababab"></div>
<div class="a" style="left:554px;top:583px;width:248px;height:15px;background:#fff;border:1px solid #ababab"></div>
<svg class="a" style="left:544.500px;top:587px" width="5" height="8" viewBox="0 0 5 8"><path d="M4.500 0v7L0 3.500z" fill="#555"/></svg>
<svg class="a" style="left:842.500px;top:587px" width="5" height="8" viewBox="0 0 5 8"><path d="M0 0v7l4.500-3.500z" fill="#555"/></svg>
<div class="a" style="left:0;top:604px;width:867px;height:11px;background:#f1f1f1;border-top:1px solid #d0d0d0"></div>
<div class="a" style="left:565px;top:604px;width:38px;height:11px;background:#c8c8c8"></div>
<div class="t" style="left:4px;top:608.700px;font-size:12.200px;color:#444">就绪</div>
<div class="t" style="left:286.5px;top:608.700px;font-size:12.200px;color:#444">平均值: 5127</div>
<div class="t" style="left:418.5px;top:608.700px;font-size:12.200px;color:#444">计数: 15</div>
<div class="t" style="left:480.5px;top:608.700px;font-size:12.200px;color:#444">求和: 76905</div>
<div class="t" style="left:822px;top:607.800px;font-size:12.200px;color:#444">136%</div>
<svg class="a" style="left:570px;top:604px" width="297" height="11" viewBox="570 604 297 11" fill="none"><path d="M578.500 608.200h11v7h-11zM578.500 611.500h11M582.200 608.200v7M585.900 608.200v7" stroke="#555" stroke-width="1"/><path d="M616.300 608.200h12v7h-12z" stroke="#555"/><path d="M619 611h6.600v4h-6.600z" stroke="#555"/><path d="M652.900 608.200h13v7h-13zM657.200 608.200v7M661.600 608.200v7" stroke="#555"/><path d="M684.200 614.300h5.500" stroke="#444" stroke-width="1.500"/><path d="M694.400 614.300h100" stroke="#777" stroke-width="1"/><rect x="747.600" y="608.400" width="4.400" height="7" fill="#555"/><path d="M798 614.300h8M802 610.600v5" stroke="#444" stroke-width="1.600"/></svg>
</body></html>
